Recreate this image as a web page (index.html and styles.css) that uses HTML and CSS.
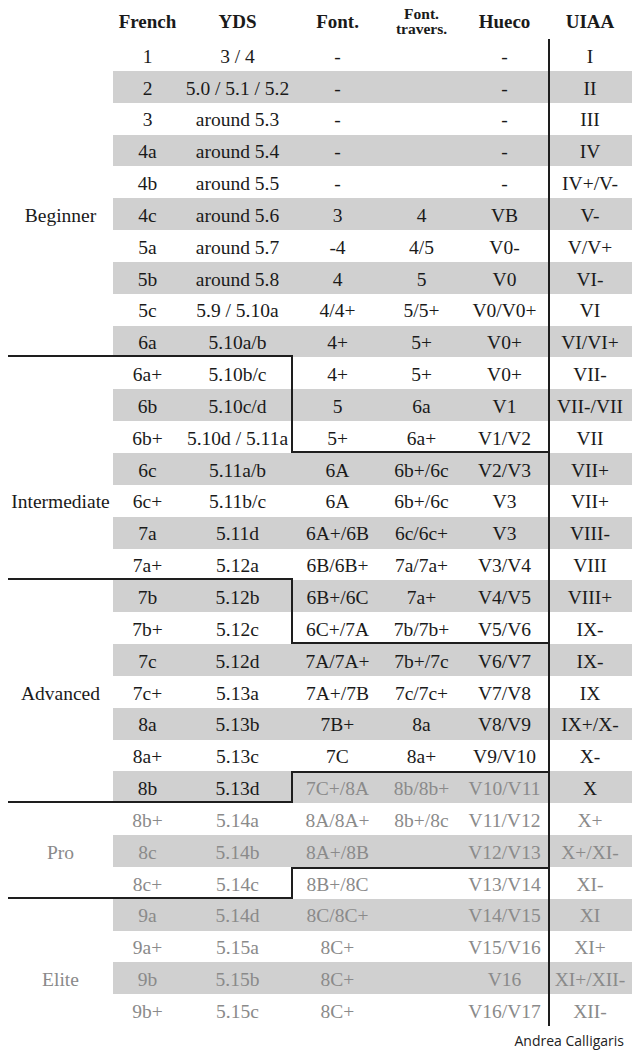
FILE: index.html
```html
<!DOCTYPE html>
<html lang="en">
<head>
<meta charset="utf-8">
<title>Climbing grades</title>
<link rel="stylesheet" href="styles.css">
</head>
<body>
<div class="page">
  <div class="chart">
    <div class="r hd"><div class="c lab"></div><div class="c fr">French</div><div class="c yds">YDS</div><div class="c fo">Font.</div><div class="c ft"><span>Font.<br>travers.</span></div><div class="c hu">Hueco</div><div class="c ui">UIAA</div></div>

    <div class="r"><div class="c lab"></div><div class="c fr">1</div><div class="c yds">3 / 4</div><div class="c fo">-</div><div class="c ft"></div><div class="c hu">-</div><div class="c ui">I</div></div>
    <div class="r g"><div class="c lab"></div><div class="c fr">2</div><div class="c yds">5.0 / 5.1 / 5.2</div><div class="c fo">-</div><div class="c ft"></div><div class="c hu">-</div><div class="c ui">II</div></div>
    <div class="r"><div class="c lab"></div><div class="c fr">3</div><div class="c yds">around 5.3</div><div class="c fo">-</div><div class="c ft"></div><div class="c hu">-</div><div class="c ui">III</div></div>
    <div class="r g"><div class="c lab"></div><div class="c fr">4a</div><div class="c yds">around 5.4</div><div class="c fo">-</div><div class="c ft"></div><div class="c hu">-</div><div class="c ui">IV</div></div>
    <div class="r"><div class="c lab"></div><div class="c fr">4b</div><div class="c yds">around 5.5</div><div class="c fo">-</div><div class="c ft"></div><div class="c hu">-</div><div class="c ui">IV+/V-</div></div>
    <div class="r g"><div class="c lab">Beginner</div><div class="c fr">4c</div><div class="c yds">around 5.6</div><div class="c fo">3</div><div class="c ft">4</div><div class="c hu">VB</div><div class="c ui">V-</div></div>
    <div class="r"><div class="c lab"></div><div class="c fr">5a</div><div class="c yds">around 5.7</div><div class="c fo">-4</div><div class="c ft">4/5</div><div class="c hu">V0-</div><div class="c ui">V/V+</div></div>
    <div class="r g"><div class="c lab"></div><div class="c fr">5b</div><div class="c yds">around 5.8</div><div class="c fo">4</div><div class="c ft">5</div><div class="c hu">V0</div><div class="c ui">VI-</div></div>
    <div class="r"><div class="c lab"></div><div class="c fr">5c</div><div class="c yds">5.9 / 5.10a</div><div class="c fo">4/4+</div><div class="c ft">5/5+</div><div class="c hu">V0/V0+</div><div class="c ui">VI</div></div>
    <div class="r g"><div class="c lab bb"></div><div class="c fr bb">6a</div><div class="c yds bb">5.10a/b</div><div class="c fo">4+</div><div class="c ft">5+</div><div class="c hu">V0+</div><div class="c ui">VI/VI+</div></div>

    <div class="r"><div class="c lab"></div><div class="c fr">6a+</div><div class="c yds br">5.10b/c</div><div class="c fo">4+</div><div class="c ft">5+</div><div class="c hu">V0+</div><div class="c ui">VII-</div></div>
    <div class="r g"><div class="c lab"></div><div class="c fr">6b</div><div class="c yds br">5.10c/d</div><div class="c fo">5</div><div class="c ft">6a</div><div class="c hu">V1</div><div class="c ui">VII-/VII</div></div>
    <div class="r"><div class="c lab"></div><div class="c fr">6b+</div><div class="c yds br">5.10d / 5.11a</div><div class="c fo bb">5+</div><div class="c ft bb">6a+</div><div class="c hu bb">V1/V2</div><div class="c ui">VII</div></div>
    <div class="r g"><div class="c lab"></div><div class="c fr">6c</div><div class="c yds">5.11a/b</div><div class="c fo">6A</div><div class="c ft">6b+/6c</div><div class="c hu">V2/V3</div><div class="c ui">VII+</div></div>
    <div class="r"><div class="c lab">Intermediate</div><div class="c fr">6c+</div><div class="c yds">5.11b/c</div><div class="c fo">6A</div><div class="c ft">6b+/6c</div><div class="c hu">V3</div><div class="c ui">VII+</div></div>
    <div class="r g"><div class="c lab"></div><div class="c fr">7a</div><div class="c yds">5.11d</div><div class="c fo">6A+/6B</div><div class="c ft">6c/6c+</div><div class="c hu">V3</div><div class="c ui">VIII-</div></div>
    <div class="r"><div class="c lab bb"></div><div class="c fr bb">7a+</div><div class="c yds bb">5.12a</div><div class="c fo">6B/6B+</div><div class="c ft">7a/7a+</div><div class="c hu">V3/V4</div><div class="c ui">VIII</div></div>

    <div class="r g"><div class="c lab"></div><div class="c fr">7b</div><div class="c yds br">5.12b</div><div class="c fo">6B+/6C</div><div class="c ft">7a+</div><div class="c hu">V4/V5</div><div class="c ui">VIII+</div></div>
    <div class="r"><div class="c lab"></div><div class="c fr">7b+</div><div class="c yds br">5.12c</div><div class="c fo bb">6C+/7A</div><div class="c ft bb">7b/7b+</div><div class="c hu bb">V5/V6</div><div class="c ui">IX-</div></div>
    <div class="r g"><div class="c lab"></div><div class="c fr">7c</div><div class="c yds">5.12d</div><div class="c fo">7A/7A+</div><div class="c ft">7b+/7c</div><div class="c hu">V6/V7</div><div class="c ui">IX-</div></div>
    <div class="r"><div class="c lab">Advanced</div><div class="c fr">7c+</div><div class="c yds">5.13a</div><div class="c fo">7A+/7B</div><div class="c ft">7c/7c+</div><div class="c hu">V7/V8</div><div class="c ui">IX</div></div>
    <div class="r g"><div class="c lab"></div><div class="c fr">8a</div><div class="c yds">5.13b</div><div class="c fo">7B+</div><div class="c ft">8a</div><div class="c hu">V8/V9</div><div class="c ui">IX+/X-</div></div>
    <div class="r"><div class="c lab"></div><div class="c fr">8a+</div><div class="c yds">5.13c</div><div class="c fo">7C</div><div class="c ft">8a+</div><div class="c hu">V9/V10</div><div class="c ui">X-</div></div>
    <div class="r g"><div class="c lab bb"></div><div class="c fr bb">8b</div><div class="c yds brb">5.13d</div><div class="c fo bt m">7C+/8A</div><div class="c ft bt m">8b/8b+</div><div class="c hu bt m">V10/V11</div><div class="c ui">X</div></div>

    <div class="r m"><div class="c lab"></div><div class="c fr">8b+</div><div class="c yds">5.14a</div><div class="c fo">8A/8A+</div><div class="c ft">8b+/8c</div><div class="c hu">V11/V12</div><div class="c ui">X+</div></div>
    <div class="r g m"><div class="c lab">Pro</div><div class="c fr">8c</div><div class="c yds">5.14b</div><div class="c fo">8A+/8B</div><div class="c ft"></div><div class="c hu">V12/V13</div><div class="c ui">X+/XI-</div></div>
    <div class="r m"><div class="c lab bb"></div><div class="c fr bb">8c+</div><div class="c yds brb">5.14c</div><div class="c fo bt">8B+/8C</div><div class="c ft bt"></div><div class="c hu bt">V13/V14</div><div class="c ui">XI-</div></div>

    <div class="r g m"><div class="c lab"></div><div class="c fr">9a</div><div class="c yds">5.14d</div><div class="c fo">8C/8C+</div><div class="c ft"></div><div class="c hu">V14/V15</div><div class="c ui">XI</div></div>
    <div class="r m"><div class="c lab"></div><div class="c fr">9a+</div><div class="c yds">5.15a</div><div class="c fo">8C+</div><div class="c ft"></div><div class="c hu">V15/V16</div><div class="c ui">XI+</div></div>
    <div class="r g m"><div class="c lab">Elite</div><div class="c fr">9b</div><div class="c yds">5.15b</div><div class="c fo">8C+</div><div class="c ft"></div><div class="c hu">V16</div><div class="c ui">XI+/XII-</div></div>
    <div class="r m"><div class="c lab"></div><div class="c fr">9b+</div><div class="c yds">5.15c</div><div class="c fo">8C+</div><div class="c ft"></div><div class="c hu">V16/V17</div><div class="c ui">XII-</div></div>
  </div>
  <div class="credit">Andrea Calligaris</div>
</div>
</body>
</html>
```

FILE: styles.css
```css
html, body {
  margin: 0;
  padding: 0;
  background: #ffffff;
}

body {
  color: #1a1a1a;
  font-family: "Liberation Serif", "Times New Roman", serif;
}

.page {
  width: 638px;
}

.chart {
  display: grid;
  grid-template-columns: 105px 69px 111px 89px 79px 87px 84px;
  grid-template-rows: 39px repeat(31, 31.85px);
  margin-left: 8px;
  font-size: 19.5px;
}

.r {
  display: contents;
}

.c {
  display: flex;
  align-items: center;
  justify-content: center;
  padding-top: 3px;
  box-sizing: border-box;
  white-space: nowrap;
  line-height: 1;
}

/* header */
.hd .c {
  font-weight: bold;
  font-size: 19px;
  padding-top: 4px;
}

.hd .ft {
  font-size: 15.5px;
  line-height: 15px;
  text-align: center;
  padding-top: 2px;
}

/* zebra rows */
.g .c:not(.lab) {
  background: #d0d0d0;
}

.g .yds,
.g .fo,
.g .ft,
.g .hu {
  background: linear-gradient(to right, #dadada 0, #dadada 1px, #d0d0d0 1px);
}

/* muted (graded beyond the staircase) */
.m,
.m .c {
  color: #8a8a8a;
}

/* UIAA divider */
.r:not(.hd) .ui {
  box-shadow: inset 2px 0 0 #1e1e1e;
}

/* staircase lines */
.bb {
  box-shadow: inset 0 -2px 0 #1e1e1e;
}

.bt {
  box-shadow: inset 0 2px 0 #1e1e1e;
}

.br {
  box-shadow: inset -2px 0 0 #1e1e1e;
}

.brb {
  box-shadow: inset -2px 0 0 #1e1e1e, inset 0 -2px 0 #1e1e1e;
}

.credit {
  text-align: right;
  padding-right: 14px;
  margin-top: 6px;
  font-family: "Open Sans", "DejaVu Sans", sans-serif;
  font-size: 14px;
  line-height: 18px;
  color: #222222;
}
```
